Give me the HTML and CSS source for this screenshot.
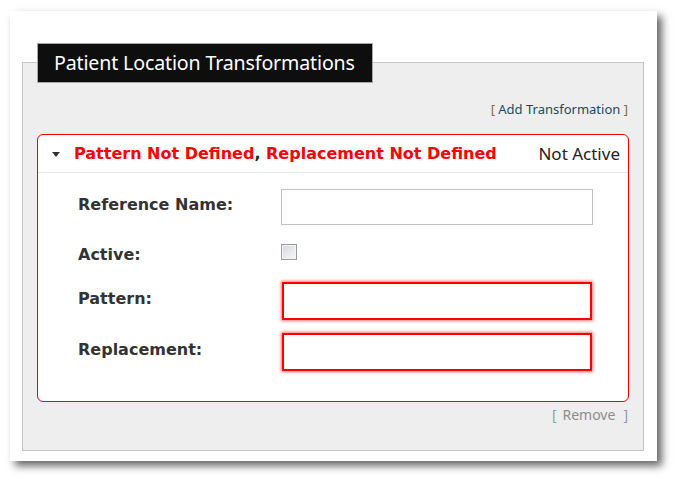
FILE: index.html
```html
<!DOCTYPE html>
<html>
<head>
<meta charset="utf-8">
<link rel="stylesheet" href="styles.css">
</head>
<body>
<div class="card">
  <div class="panel">
    <div class="title">Patient Location Transformations</div>
    <div class="actions"><span class="br">[</span> <span class="add">Add Transformation</span> <span class="br">]</span></div>
    <div class="item">
      <div class="item-head">
        <span class="caret"></span>
        <span class="summary"><span class="err">Pattern Not Defined</span>, <span class="err">Replacement Not Defined</span></span>
        <span class="status">Not Active</span>
      </div>
      <div class="item-body">
        <div class="row">
          <label class="lbl">Reference Name:</label>
          <input class="field" type="text">
        </div>
        <div class="row row-check">
          <label class="lbl lbl-check">Active:</label>
          <input class="check" type="checkbox">
        </div>
        <div class="row row-gap">
          <label class="lbl">Pattern:</label>
          <input class="field invalid" type="text">
        </div>
        <div class="row row-last">
          <label class="lbl">Replacement:</label>
          <input class="field invalid" type="text">
        </div>
      </div>
    </div>
    <div class="remove"><span class="br2">[</span><span class="rm">Remove</span><span class="br2">]</span></div>
  </div>
</div>
</body>
</html>
```

FILE: styles.css
```css
* { box-sizing: border-box; }
html, body { margin: 0; padding: 0; background: #fff; }
html { min-height: 480px; }
body { font-family: "Noto Sans", "Open Sans", sans-serif; min-height: 480px; }

.card {
  margin: 11px 0 0 10px;
  width: 647px;
  height: 450px;
  background: #fff;
  box-shadow: 5px 5px 8px rgba(0, 0, 0, 0.6);
  padding: 51px 0 0 12px;
}

.panel {
  width: 622px;
  height: 389px;
  background: #eeeeee;
  border: 1px solid #c6c6c6;
  padding: 0 14px 0 14px;
}

.title {
  width: fit-content;
  margin: -20px 0 0 0;
  height: 40px;
  padding: 0 17px 0 16px;
  background: #0e0e0e;
  border: 1px solid #a8a8a8;
  color: #fff;
  font-size: 19.6px;
  line-height: 37px;
  letter-spacing: -0.15px;
}

.actions {
  margin-top: 17px;
  height: 34px;
  text-align: right;
  font-size: 13px;
  line-height: 18px;
  padding-right: 1px;
}
.br { color: #8b6a2e; }
.add { color: #1d4a5c; }

.item {
  height: 268px;
  background: #fff;
  border: 1px solid #f00000;
  border-radius: 6px;
}

.item-head {
  display: flex;
  align-items: center;
  height: 38px;
  border-bottom: 1px solid #e6e6e6;
  padding: 0 8px 0 14px;
}
.caret {
  width: 0; height: 0;
  border-left: 4px solid transparent;
  border-right: 4px solid transparent;
  border-top: 5px solid #333;
  margin-right: 14px;
  margin-top: 1px;
}
.summary {
  flex: 1;
  font-family: "DejaVu Sans", Verdana, sans-serif;
  font-weight: bold;
  font-size: 16px;
  color: #222;
}
.err { color: #ff0000; }
.status {
  font-size: 17px;
  color: #222;
}

.item-body {
  padding: 16px 0 0 40px;
}
.row {
  display: flex;
  align-items: center;
}
.row + .row { margin-top: 15px; }
.row-check { height: 24px; }
.row + .row-gap { margin-top: 18px; }
.row + .row-last { margin-top: 13px; }
.lbl {
  width: 203px;
  font-family: "DejaVu Sans", Verdana, sans-serif;
  font-weight: bold;
  font-size: 16px;
  color: #333;
  margin-top: -5px;
}
.lbl-check { margin-top: 4px; }
.field {
  width: 312px;
  height: 36px;
  margin: 0;
  border: 1px solid #c2c2c2;
  background: #fff;
  outline: none;
}
.field.invalid {
  height: 38px;
  margin-left: 1px;
  width: 310px;
  border: 2px solid #ff0000;
  box-shadow: 0 0 3px 1px rgba(255, 0, 0, 0.55);
}
.check {
  appearance: none;
  -webkit-appearance: none;
  width: 16px;
  height: 16px;
  margin: 0;
  border: 1px solid #9a9a9a;
  background: linear-gradient(135deg, #d4d8de 0%, #f6f7f9 100%);
  box-shadow: inset 0 0 0 1px #f4f4f4;
}

.remove {
  margin-top: 3px;
  text-align: right;
  font-size: 14px;
  line-height: 20px;
  color: #8c8c8c;
  padding-right: 1px;
}
.rm { margin: 0 8px 0 6px; }
.br2 { color: #8a9bb0; }
```
